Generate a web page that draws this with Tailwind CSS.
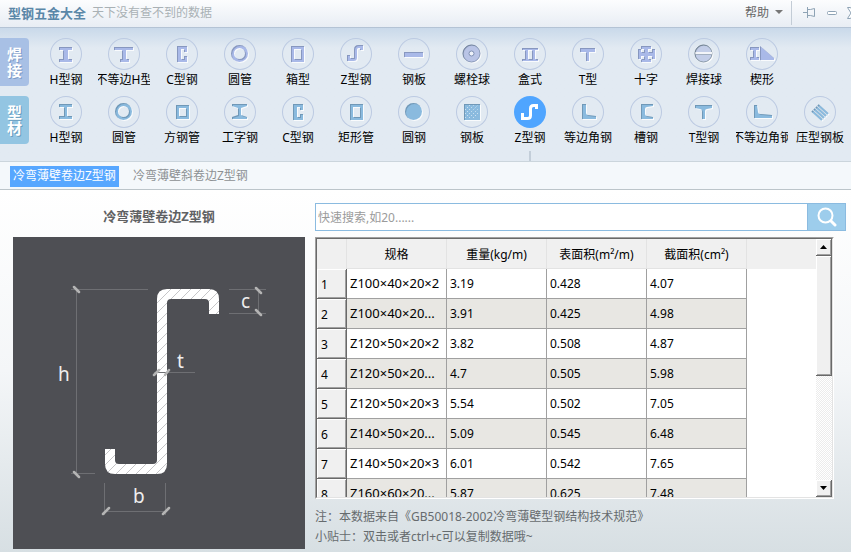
<!DOCTYPE html>
<html lang="zh-CN">
<head>
  <meta charset="UTF-8" />
  <meta name="viewport" content="width=device-width, initial-scale=1.0"/>
  <title>型钢五金大全</title>
  <script src="https://cdn.jsdelivr.net/npm/@tailwindcss/browser@4"></script>
</head>
<body class="min-h-screen flex flex-col overflow-x-hidden bg-[#d8e0e4] font-['Noto_Sans','Noto_Sans_CJK_SC',sans-serif] text-xs text-black">

  <!-- Shared icon filter: dark upper left edge, white lower right edge -->
  <svg class="absolute w-0 h-0" aria-hidden="true">
    <filter id="bevel" x="-10%" y="-10%" width="130%" height="130%" color-interpolation-filters="sRGB">
      <feOffset in="SourceAlpha" dx="1" dy="1" result="off" />
      <feFlood flood-color="#fff" flood-opacity="0.8" />
      <feComposite in2="off" operator="in" result="light" />
      <feComposite in="SourceAlpha" in2="off" operator="out" result="edge" />
      <feFlood flood-color="#234" flood-opacity="0.25" />
      <feComposite in2="edge" operator="in" result="dark" />
      <feMerge><feMergeNode in="light" /><feMergeNode in="SourceGraphic" /><feMergeNode in="dark" /></feMerge>
    </filter>
  </svg>

  <!-- Title bar -->
  <header class="h-7 shrink-0 flex items-center pl-2 pb-0.5 border-b border-[#b4c3d5] bg-linear-to-b from-[#fcfdfe] to-[#e8edf4]">
    <h1 class="text-[13px] leading-5 font-bold text-[#5a87a8]">型钢五金大全</h1>
    <span class="ml-1.5 leading-5 text-[#a9b1b5]">天下没有查不到的数据</span>
    <div class="ml-auto flex items-center">
      <button class="flex items-center gap-1.5 text-[#666]">帮助
        <svg width="8" height="5" class="fill-[#777]"><path d="M0 0h8L4 4z" /></svg>
      </button>
      <span class="w-px h-6 ml-2 mr-[11px] bg-[#c3ccd6]"></span>
      <button aria-label="固定">
        <svg width="12" height="12" fill="none" stroke="#8ea3b5"><path d="M0 5.500h4M4.500 0v11M4.500 2.500h3l4-1v8l-4-1h-3" /></svg>
      </button>
      <button aria-label="最小化" class="ml-3">
        <svg width="10" height="4" fill="#fff" stroke="#8ea3b5"><rect x=".5" y=".5" width="9" height="3" rx="1" /></svg>
      </button>
      <button aria-label="关闭" class="ml-2.5 -mr-2">
        <svg width="12" height="12" fill="#fff" stroke="#8ea3b5"><path d="M.5 .5h3L6 4l2.500-3.500h3L8 6l3.500 5.500h-3L6 8l-2.500 3.500h-3L4 6z" /></svg>
      </button>
    </div>
  </header>

  <!-- Category rows -->
  <nav class="shrink-0 pt-2.5 pb-[13px] flex flex-col gap-1.5 border-b border-[#cbd5dc] bg-[#e2eaf2] bg-linear-to-b from-[#c9d9ea] to-[#e2eaf2] to-15%">
    <div class="flex gap-2">
      <h2 class="w-[29px] h-12 shrink-0 flex items-center rounded-r-sm bg-[#a8c0e5] px-[7px] text-[15px] leading-4 font-bold text-white text-shadow-[1px_1px_0_#7f9cc8]">焊接</h2>
      <div id="weldRow" class="flex"></div>
    </div>
    <div class="flex gap-2">
      <h2 class="w-[29px] h-12 shrink-0 flex items-center rounded-r-sm bg-[#93c5e2] px-[7px] text-[15px] leading-4 font-bold text-white text-shadow-[1px_1px_0_#6a9fc0]">型材</h2>
      <div id="profileRow" class="flex"></div>
    </div>
  </nav>

  <!-- Sub tabs -->
  <div class="h-7 shrink-0 flex items-center gap-[11px] px-2.5 pt-px border-b border-[#bcc5ca] bg-[#f4f8fb]">
    <button class="h-[21px] px-[3px] bg-[#57a7ff] text-white">冷弯薄壁卷边Z型钢</button>
    <button class="h-[21px] px-[3px] text-[#8c9093]">冷弯薄壁斜卷边Z型钢</button>
  </div>

  <main class="flex-1 flex gap-2.5 pl-[13px] pr-[5px] pb-[3px] bg-linear-to-b from-white via-[#f4f6f8] to-[#d7dfe3]">
    <section class="w-[292px] shrink-0">
      <h2 class="h-[47px] pt-4 text-center text-[13px] leading-5 font-bold text-[#5f6163]">冷弯薄壁卷边Z型钢</h2>
      <svg viewBox="0 0 292 312" class="block w-full bg-[#4e4f54]">
        <defs>
          <pattern id="hatch" width="10" height="10" patternUnits="userSpaceOnUse">
            <rect width="10" height="10" fill="#fff" />
            <path d="M-2 12L12-2M-2 2L2-2M8 12L12 8" stroke="#c6c6c8" />
          </pattern>
        </defs>
        <path fill="url(#hatch)" d="M92 212H102V223Q102 227 106 227H140Q144 227 144 223V62Q144 52 154 52H196Q206 52 206 62V77H196V66Q196 62 192 62H158Q154 62 154 66V227Q154 237 144 237H102Q92 237 92 227Z" />
        <path fill="none" stroke="#6e6f73" d="M58 52.500H135M63.500 52V237M58 236.500H82M216 52.500H253M216 76.500H253M245.500 52V77M141 135.500H182M91.500 246V278M152.500 246V278M91 274.500H153" />
        <path fill="none" stroke="#b4b4b4" stroke-width="2.500" stroke-linecap="round" d="M61 50L66 55M61 235L66 240M243 51L248 56M243 73L248 78M141 138L146 133M152 138L156 133M90 277L96 271M150 277L156 271" />
        <g fill="#eee" font-size="19">
          <text x="45" y="144">h</text>
          <text x="228" y="71">c</text>
          <text x="164" y="131">t</text>
          <text x="120" y="266">b</text>
        </g>
      </svg>
    </section>

    <section class="flex-1 min-w-0 pt-[13px]">
      <form class="h-7 flex border border-[#8bbbe0] bg-white" onsubmit="return false">
        <input type="text" aria-label="快速搜索" placeholder="快速搜索,如20......" class="flex-1 min-w-0 px-0.5 pt-0.5 outline-none placeholder:text-[#9b9b9b]" />
        <button aria-label="搜索" class="w-[38px] flex items-center justify-center border-l border-[#8bbbe0] bg-[#9dcdec]">
          <svg width="20" height="20" fill="none" stroke="#fff" stroke-linecap="round">
            <circle cx="8.500" cy="8.500" r="7" stroke-width="2" /><path d="M14 14l4 4" stroke-width="3" />
          </svg>
        </button>
      </form>

      <!-- Data table -->
      <div class="mt-1.5 mr-3 h-[262px] border border-t-[#a0a0a0] border-l-[#a0a0a0] border-r-white border-b-white">
        <div class="h-full flex border border-t-[#696969] border-l-[#696969] border-r-[#e3e3e3] border-b-[#e3e3e3] bg-white">
          <div class="flex-1 overflow-hidden bg-linear-to-b from-[#f0f0f0] from-[30px] to-white to-[30px]">
            <table class="w-[430px] table-fixed border-separate border-spacing-0">
              <thead>
                <tr class="h-[30px]">
                  <th class="w-[30px] p-0 border-r border-[#e3e3e3]"></th>
                  <th scope="col" class="w-[100px] p-0 pt-0.5 font-normal border-r border-b border-[#e3e3e3]">规格</th>
                  <th scope="col" class="w-[100px] p-0 pt-0.5 font-normal border-r border-b border-[#e3e3e3]">重量(kg/m)</th>
                  <th scope="col" class="w-[100px] p-0 pt-0.5 font-normal border-r border-b border-[#e3e3e3]">表面积(m²/m)</th>
                  <th scope="col" class="w-[100px] p-0 pt-0.5 font-normal border-r border-b border-[#e3e3e3]">截面积(cm²)</th>
                </tr>
              </thead>
              <tbody id="steelRows"></tbody>
            </table>
          </div>
          <!-- Scroll bar -->
          <div class="w-4 shrink-0 flex flex-col bg-[conic-gradient(#fff_25%,#ececec_0_50%,#fff_0_75%,#ececec_0)] bg-size-[2px_2px]">
            <button aria-label="向上滚动" class="h-[17px] flex items-center justify-center bg-[#f0f0f0] border-r border-b border-[#696969] shadow-[inset_1px_1px_#fff,inset_-1px_-1px_#a0a0a0]">
              <svg width="7" height="4"><path d="M0 4h7L3.500 0z" /></svg>
            </button>
            <div class="h-[120px] bg-[#f0f0f0] border-r border-b border-[#696969] shadow-[inset_1px_1px_#fff,inset_-1px_-1px_#a0a0a0]"></div>
            <button aria-label="向下滚动" class="mt-auto h-[17px] flex items-center justify-center bg-[#f0f0f0] border-r border-b border-[#696969] shadow-[inset_1px_1px_#fff,inset_-1px_-1px_#a0a0a0]">
              <svg width="7" height="4"><path d="M0 0h7L3.500 4z" /></svg>
            </button>
          </div>
        </div>
      </div>

      <div class="pt-2 leading-5 text-[#666b6e]">
        <p>注：本数据来自《GB50018-2002冷弯薄壁型钢结构技术规范》</p>
        <p>小贴士：双击或者ctrl+c可以复制数据哦~</p>
      </div>
    </section>
  </main>

  <script>
    const zShape = '<path d="M8.500 17v5.500h5q3 0 3-3v-7q0-3 3-3h3V13" fill="none" stroke="currentColor" stroke-width="3" />';
    const cShape = '<path d="M11 8h10v6h-3v-3h-3v10h3v-3h3v6H11z" />';
    const ring = '<circle cx="15.500" cy="15.500" r="7" fill="none" stroke="currentColor" stroke-width="3" />';

    const weld = [
      { name: 'H型钢', icon: '<path d="M9 9h13v3h-4v9h4v3H9v-3h4v-9H9z" />' },
      { name: '不等边H型', icon: '<path d="M6 9h19v3h-7v9h3v3h-9v-3h2v-9H6z" />' },
      { name: 'C型钢', icon: cShape },
      { name: '圆管', icon: ring },
      { name: '箱型', icon: '<path fill-rule="evenodd" d="M9 8h13v16H9zM12 11v10h7V11z" />' },
      { name: 'Z型钢', icon: '<path d="M8.500 17v4.500h5q2 0 2-2v-8q0-3 3-3h3V12" fill="none" stroke="currentColor" stroke-width="3" />' },
      { name: '钢板', icon: '<path d="M6 14h19v5H6z" />' },
      { name: '螺栓球', icon: '<circle cx="15.500" cy="15.500" r="8.500" fill="#b9c4e6" stroke="#8798b8" /><circle cx="15.500" cy="15.500" r="2.500" fill="#eef2fa" stroke="#7f90b4" />' },
      { name: '盒式', icon: '<path d="M8 10h16v2h-3v9h3v2H8v-2h3v-9H8zM14 12v9h4v-9z" fill-rule="evenodd" />' },
      { name: 'T型', icon: '<path d="M8 10h15v4h-6v9h-3v-9H8z" />' },
      { name: '十字', icon: '<path d="M11 8h10v3h-3v3h4v-3h3v10h-3v-3h-4v3h3v3H11v-3h3v-3h-3v3H8V11h3v3h3v-3h-3z" />' },
      { name: '焊接球', icon: '<circle cx="15.500" cy="15.500" r="8.500" fill="#c3cee8" stroke="#8798a8" /><path d="M7 14h17v2H7z" fill="#f3f5f9" /><path d="M7 16h17v1H7z" fill="#a3b0c0" />' },
      { name: '楔形', icon: '<path d="M4 9h9v3h-3v7h3v3H4v-3h3v-7H4zM14 8l14 12v2H14z" />' }
    ];

    const profiles = [
      { name: 'H型钢', icon: '<path d="M9 8h13v3h-5v9h5v3H9v-3h5v-9H9z" />' },
      { name: '圆管', icon: ring },
      { name: '方钢管', icon: '<path fill-rule="evenodd" d="M10 9h13v14H10zM13 12v8h7v-8z" />' },
      { name: '工字钢', icon: '<path d="M8 8h15v2l-6 2v7l6 2v2H8v-2l6-2v-7l-6-2z" />' },
      { name: 'C型钢', icon: cShape },
      { name: '矩形管', icon: '<path fill-rule="evenodd" d="M10 8h13v16H10zM13 11v10h7V11z" />' },
      { name: '圆钢', icon: '<circle cx="15.500" cy="15.500" r="8.500" />' },
      { name: '钢板', icon: '<path d="M8 8h16v16H8z" /><path d="M9 14l5-5M9 18l9-9M9 22l13-13M13 22l9-9M17 22l5-5" stroke="#e6f2fa" stroke-dasharray="1 2" />' },
      { name: 'Z型钢', icon: zShape, active: true },
      { name: '等边角钢', icon: '<path d="M10 8h4v9q0 2 2 2l8 1v3H10z" />' },
      { name: '槽钢', icon: '<path d="M11 8h12v2l-6 1q-2 0-2 2v5q0 2 2 2l6 1v2H11z" />' },
      { name: 'T型钢', icon: '<path d="M7 9h17v3l-5 1q-2 0-2 2v8h-3v-8q0-2-2-2l-5-1z" />' },
      { name: '不等边角钢', icon: '<path d="M8 9h3l1 7q0 2 2 2l12 1v3H8z" />' },
      { name: '压型钢板', icon: '<path d="M8 15l10 9M10 13l10 9M12 11l10 9M14 9l10 9" fill="none" stroke="currentColor" stroke-width="2" />' }
    ];

    const steel = [
      ['Z100×40×20×2', '3.19', '0.428', '4.07'],
      ['Z100×40×20...', '3.91', '0.425', '4.98'],
      ['Z120×50×20×2', '3.82', '0.508', '4.87'],
      ['Z120×50×20...', '4.7', '0.505', '5.98'],
      ['Z120×50×20×3', '5.54', '0.502', '7.05'],
      ['Z140×50×20...', '5.09', '0.545', '6.48'],
      ['Z140×50×20×3', '6.01', '0.542', '7.65'],
      ['Z160×60×20...', '5.87', '0.625', '7.48']
    ];

    function renderNav(id, items, color) {
      document.getElementById(id).innerHTML = items.map(item => `
        <button class="relative w-[58px] shrink-0 flex flex-col items-center">
          <span class="size-8 rounded-full ${item.active ? 'bg-[#4fa5ff] text-white' : 'shadow-[inset_0_0_0_1px_#bccae2] ' + color}">
            <svg viewBox="0 0 32 32" class="size-8 fill-current"><g ${item.active ? '' : 'filter="url(#bevel)"'}>${item.icon}</g></svg>
          </span>
          <span class="w-[52px] flex justify-center overflow-hidden whitespace-nowrap leading-5">${item.name}</span>
          ${item.active ? '<span class="absolute top-[55px] w-0.5 h-2.5 bg-[#c3ced9]"></span>' : ''}
        </button>
      `).join('');
    }

    function renderTable() {
      document.getElementById('steelRows').innerHTML = steel.map((row, i) => `
        <tr class="h-[30px] ${i % 2 ? 'bg-[#e8e7e3]' : 'bg-white'}">
          <th scope="row" class="p-0 pl-1 pt-0.5 text-left font-normal bg-[#f0f0f0] border-r border-b border-[#696969] shadow-[inset_1px_1px_#fff,inset_-1px_-1px_#a0a0a0]">${i + 1}</th>
          ${row.map((cell, j) => `<td class="p-0 pl-[3px] border-r border-b border-[#a0a0a0] whitespace-nowrap ${j === 0 ? 'text-[13px]' : ''}">${cell}</td>`).join('')}
        </tr>
      `).join('');
    }

    renderNav('weldRow', weld, 'text-[#a9b9e8]');
    renderNav('profileRow', profiles, 'text-[#8abade]');
    renderTable();
  </script>
</body>
</html>
